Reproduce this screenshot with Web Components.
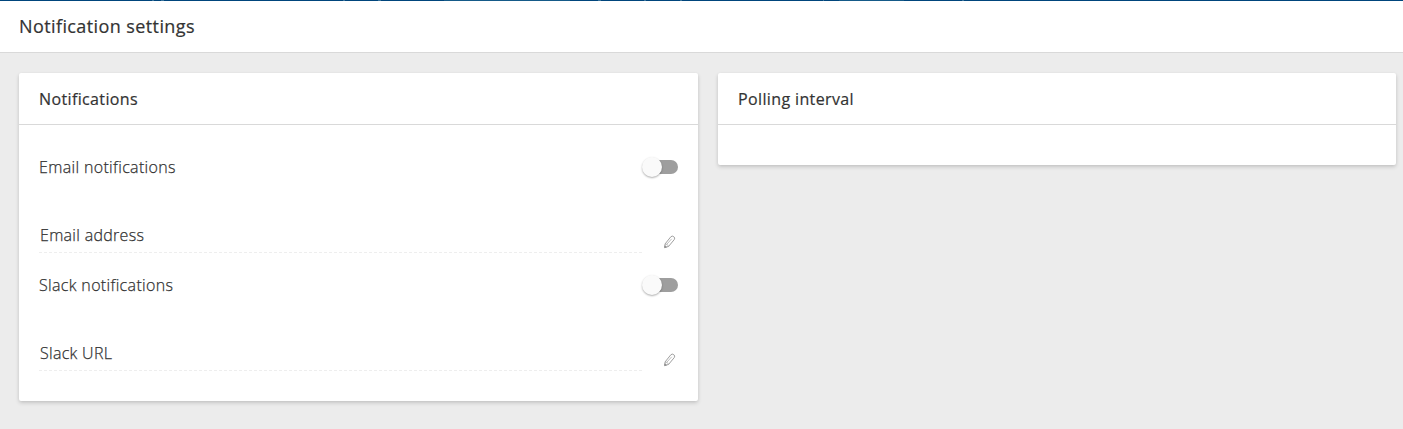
<!DOCTYPE html>
<html lang="en">
<head>
<meta charset="utf-8">
<title>Notification settings</title>
<style>
html, body { margin: 0; height: 100%; overflow: hidden; background: #ececec; }
body { font-family: "Open Sans", sans-serif; font-size: 16px; color: #333; }
</style>
</head>
<body>
<settings-page></settings-page>
<script>
const define = (name, html) => customElements.define(name, class extends HTMLElement {
  constructor() {
    super();
    this.attachShadow({ mode: 'open' }).innerHTML = html;
  }
});

define('page-header', `
<style>
:host { display: block; height: 53px; box-sizing: border-box; background: #fff; border-bottom: 1px solid #d9d9d9; }
.nav { height: 1px; background: linear-gradient(90deg, #00457c 152px, #39739c 152px 154px, #00457c 154px 161px, #39739c 161px 164px, #00457c 164px 343px, #39739c 343px 345px, #00457c 345px 378px, #39739c 378px 381px, #00457c 381px 444px, #155a88 444px 570px, #00457c 570px 598px, #39739c 598px 601px, #00457c 601px 644px, #39739c 644px 646px, #00457c 646px 680px, #39739c 680px 682px, #00457c 682px 823px, #39739c 823px 824px, #00457c 824px 839px, #155a88 839px 904px, #00457c 904px 962px, #39739c 962px 964px, #00457c 964px); }
h1 { margin: 0; padding-left: 19px; font-size: 18px; font-weight: 500; line-height: 51px; letter-spacing: .4px; -webkit-text-stroke: .2px #333; }
</style>
<div class="nav"></div><h1><slot></slot></h1>`);

define('settings-card', `
<style>
:host { display: block; background: #fff; border-radius: 2px; box-shadow: 0 2px 4px rgba(0,0,0,.14), 0 1px 3px rgba(0,0,0,.06); }
header { box-sizing: border-box; height: 52px; line-height: 50px; padding: 1px 20px 0; border-bottom: 1px solid #d9d9d9; font-weight: 500; letter-spacing: .37px; -webkit-text-stroke: .2px #333; }
.body { padding: 20px; }
</style>
<header><slot name="title"></slot></header>
<div class="body"><slot></slot></div>`);

define('toggle-switch', `
<style>
:host { display: flex; align-items: center; width: 36px; height: 20px; }
.track { display: flex; align-items: center; width: 34px; height: 14px; margin-left: 2px; border-radius: 7px; background: #9e9e9e; }
.thumb { flex: none; width: 20px; height: 20px; margin-left: -2px; border-radius: 50%; background: #fafafa; box-shadow: 0 1px 2px rgba(0,0,0,.32); }
</style>
<div class="track"><div class="thumb"></div></div>`);

define('toggle-row', `
<style>
:host { display: flex; justify-content: space-between; align-items: center; height: 44px; }
</style>
<span><slot></slot></span><toggle-switch></toggle-switch>`);

define('edit-icon', `
<style>
:host { display: block; width: 12px; height: 14px; }
svg { display: block; }
</style>
<svg width="12" height="14" viewBox="0 0 12 14" fill="none" stroke="#949494" stroke-width=".9" stroke-linejoin="round">
<path d="M.7 12.6 1.1 8.9 6.8 1.8Q8.2.4 9.8 1.7T10.3 4.5L4.6 11.4Z"/>
<path d="M1.1 8.9Q3.6 8.8 4.6 11.4M2.9 9.2 7.7 3.8" stroke-width=".6"/>
<path d="m.7 12.6.2-1.8 1.5 1.2Z" fill="#777"/>
</svg>`);

define('edit-field', `
<style>
:host { display: flex; height: 34px; }
.value { width: 603px; height: 34px; line-height: 32px; padding-left: 1px; box-sizing: border-box;
  background: repeating-linear-gradient(90deg, #eee 0 3px, transparent 3px 5px) 0 100% / 100% 1px no-repeat; }
edit-icon { margin: 16px 0 0 22px; }
</style>
<div class="value"><slot></slot></div><edit-icon></edit-icon>`);

define('settings-page', `
<style>
:host { display: block; }
main { display: grid; grid-template-columns: 679px 678px; gap: 20px; align-items: start; padding: 20px 0 0 19px; }
.group { display: flex; flex-direction: column; gap: 30px; height: 118px; }
toggle-row, edit-field { font-weight: 300; letter-spacing: .34px; -webkit-text-stroke: .25px #333; }
edit-field { letter-spacing: .3px; }
</style>
<page-header>Notification settings</page-header>
<main>
<settings-card><span slot="title">Notifications</span>
<div class="group"><toggle-row>Email notifications</toggle-row><edit-field>Email address</edit-field></div>
<div class="group"><toggle-row>Slack notifications</toggle-row><edit-field>Slack URL</edit-field></div>
</settings-card>
<settings-card><span slot="title">Polling interval</span></settings-card>
</main>`);
</script>
</body>
</html>
